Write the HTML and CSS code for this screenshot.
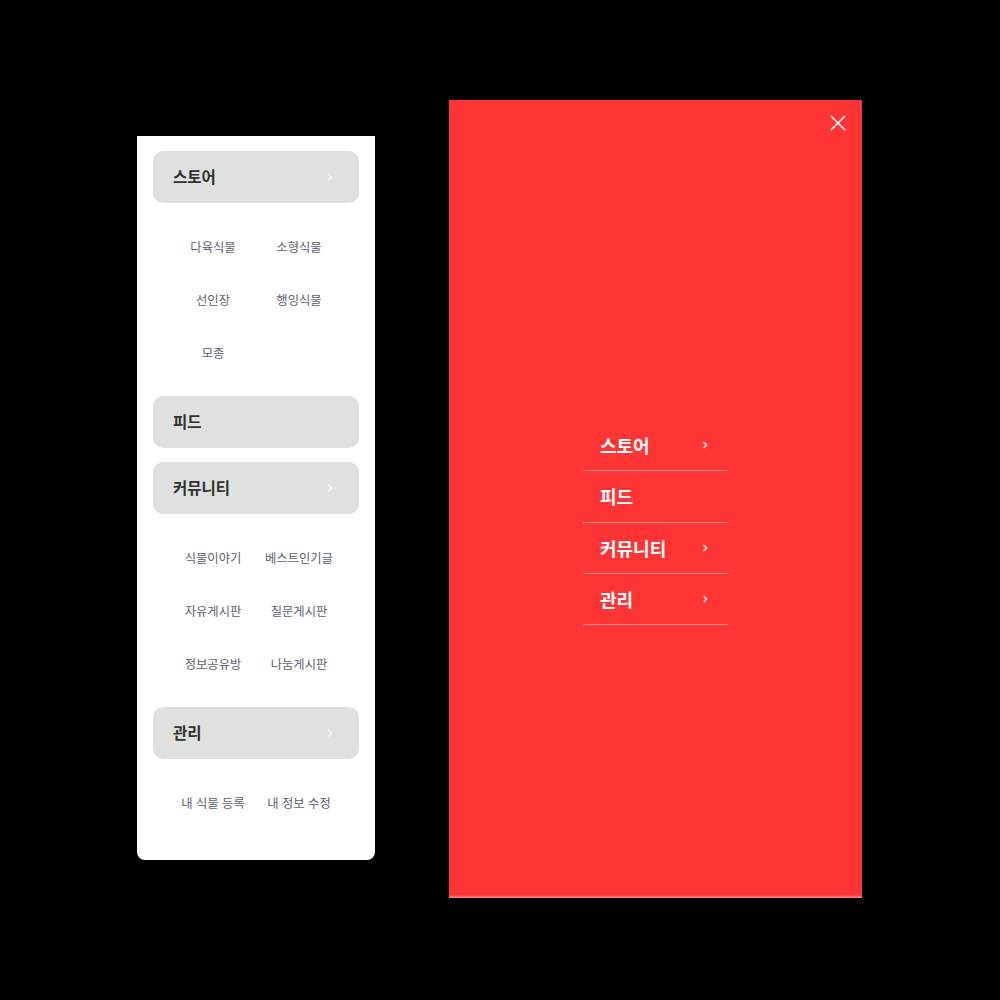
FILE: index.html
```html
<!DOCTYPE html>
<html lang="ko">
<head>
  <meta charset="UTF-8">
  <meta name="viewport" content="width=device-width, initial-scale=1.0">
  <title>메뉴</title>
  <link rel="stylesheet" href="styles.css">
</head>
<body>
  <div class="stage">
    <!-- 데스크탑 사이드 메뉴 -->
    <nav class="side">
      <div class="cat">
        <span>스토어</span>
        <svg class="arrow" width="8" height="10" viewBox="0 0 8 10"><polyline points="2,1.5 5.5,5 2,8.5" /></svg>
      </div>
      <ul class="subs">
        <li>다육식물</li>
        <li>소형식물</li>
        <li>선인장</li>
        <li>행잉식물</li>
        <li>모종</li>
      </ul>

      <div class="cat">
        <span>피드</span>
      </div>

      <div class="cat cat-gap">
        <span>커뮤니티</span>
        <svg class="arrow" width="8" height="10" viewBox="0 0 8 10"><polyline points="2,1.5 5.5,5 2,8.5" /></svg>
      </div>
      <ul class="subs">
        <li>식물이야기</li>
        <li>베스트인기글</li>
        <li>자유게시판</li>
        <li>질문게시판</li>
        <li>정보공유방</li>
        <li>나눔게시판</li>
      </ul>

      <div class="cat">
        <span>관리</span>
        <svg class="arrow" width="8" height="10" viewBox="0 0 8 10"><polyline points="2,1.5 5.5,5 2,8.5" /></svg>
      </div>
      <ul class="subs">
        <li>내 식물 등록</li>
        <li>내 정보 수정</li>
      </ul>
    </nav>

    <!-- 모바일 메뉴 -->
    <div class="mobile">
      <div class="mobile-top">
        <svg class="close" width="16" height="16" viewBox="0 0 16 16"><path d="M1 1 L15 15 M15 1 L1 15" /></svg>
      </div>
      <div class="mobile-body">
        <ul class="mlist">
          <li><span>스토어</span><svg width="8" height="10" viewBox="0 0 8 10"><polyline points="2.5,2 5.5,5 2.5,8" /></svg></li>
          <li><span>피드</span></li>
          <li><span>커뮤니티</span><svg width="8" height="10" viewBox="0 0 8 10"><polyline points="2.5,2 5.5,5 2.5,8" /></svg></li>
          <li><span>관리</span><svg width="8" height="10" viewBox="0 0 8 10"><polyline points="2.5,2 5.5,5 2.5,8" /></svg></li>
        </ul>
      </div>
    </div>
  </div>
</body>
</html>
```

FILE: styles.css
```css
* {
  box-sizing: border-box;
}
body {
  margin: 0;
  background: #000;
  font-family: "Noto Sans CJK KR", "Noto Sans", sans-serif;
}
ul {
  list-style: none;
  margin: 0;
  padding: 0;
}
.stage {
  width: 1000px;
  height: 1000px;
  display: flex;
  align-items: flex-start;
  gap: 74px;
  padding-left: 137px;
}

/* side menu */
.side {
  width: 238px;
  margin-top: 136px;
  background: #fff;
  padding: 15px 16px 14px;
  border-radius: 0 0 8px 8px;
}
.cat {
  height: 52px;
  background: #dfe0df;
  border-radius: 10px;
  display: flex;
  align-items: center;
  justify-content: space-between;
  padding: 0 25px 3px 20px;
  font-size: 15.5px;
  font-weight: 700;
  color: #2d332f;
}
.cat .arrow {
  margin-top: 3px;
}
.cat-gap {
  margin-top: 14px;
}
.arrow polyline {
  fill: none;
  stroke: #f7f7f7;
  stroke-width: 1.6;
}
.subs {
  display: grid;
  grid-template-columns: 86px 86px;
  justify-content: center;
  padding: 17px 0;
}
.subs li {
  height: 53px;
  display: flex;
  align-items: center;
  justify-content: center;
  font-size: 12.3px;
  color: #5a6170;
  white-space: nowrap;
}

/* mobile menu */
.mobile {
  width: 413px;
  height: 798px;
  margin-top: 100px;
  background: #fe3435;
  display: flex;
  flex-direction: column;
  box-shadow: inset 0 -3px 2px -1px rgba(255, 255, 255, 0.35);
}
.mobile-top {
  height: 45px;
  display: flex;
  align-items: center;
  justify-content: flex-end;
  padding-right: 16px;
}
.close path {
  stroke: #fff;
  stroke-width: 1.5;
  fill: none;
}
.mobile-body {
  flex: 1;
  display: flex;
  align-items: center;
  justify-content: center;
  padding-top: 2px;
}
.mlist {
  width: 145px;
}
.mlist li {
  height: 51.3px;
  display: flex;
  align-items: center;
  justify-content: space-between;
  padding: 0 19px 0 17px;
  border-bottom: 1px solid rgba(255, 255, 255, 0.45);
  color: #fff;
  font-size: 18px;
  font-weight: 700;
}
.mlist polyline {
  fill: none;
  stroke: #ffe6e6;
  stroke-width: 1.6;
}
```
